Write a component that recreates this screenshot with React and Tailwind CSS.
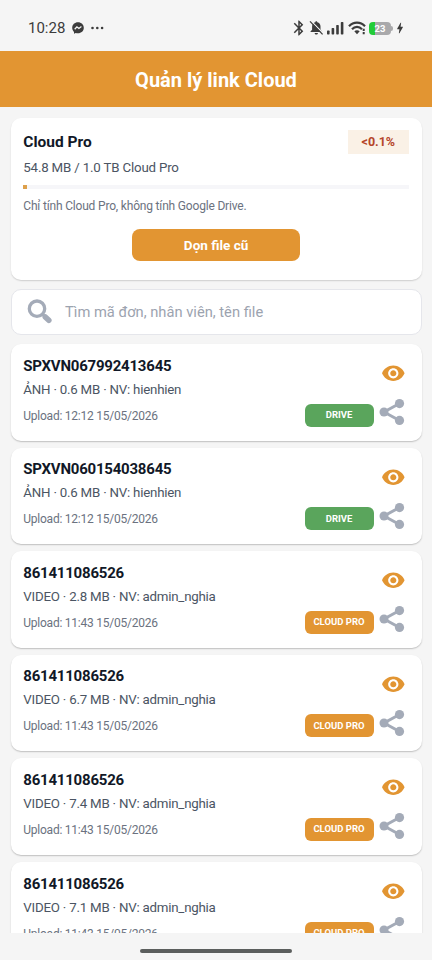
import React from "react";
import { MdBluetooth, MdBolt, MdVisibility } from "react-icons/md";

const files = [
  { code: "SPXVN067992413645", type: "ẢNH", size: "0.6 MB", staff: "hienhien", time: "12:12 15/05/2026", source: "DRIVE" },
  { code: "SPXVN060154038645", type: "ẢNH", size: "0.6 MB", staff: "hienhien", time: "12:12 15/05/2026", source: "DRIVE" },
  { code: "861411086526", type: "VIDEO", size: "2.8 MB", staff: "admin_nghia", time: "11:43 15/05/2026", source: "CLOUD PRO" },
  { code: "861411086526", type: "VIDEO", size: "6.7 MB", staff: "admin_nghia", time: "11:43 15/05/2026", source: "CLOUD PRO" },
  { code: "861411086526", type: "VIDEO", size: "7.4 MB", staff: "admin_nghia", time: "11:43 15/05/2026", source: "CLOUD PRO" },
  { code: "861411086526", type: "VIDEO", size: "7.1 MB", staff: "admin_nghia", time: "11:43 15/05/2026", source: "CLOUD PRO" },
];

const ShareIcon = () => (
  <svg width="26" height="28" viewBox="0 0 26 28" fill="#a4abb8">
    <path d="M20.500 5.500L5 14l15.500 8.500" fill="none" stroke="#a4abb8" strokeWidth="3" />
    <circle cx="20.500" cy="5.600" r="4.600" />
    <circle cx="5" cy="14" r="4.500" />
    <circle cx="20.500" cy="22.400" r="4.600" />
  </svg>
);

const SearchIcon = () => (
  <svg width="26" height="26" viewBox="0 0 26 26" fill="none" stroke="#a4abb8">
    <circle cx="10" cy="9.700" r="7.700" strokeWidth="3.300" />
    <path d="M15.300 15l3 3" strokeWidth="3" />
    <path d="M18.300 18l3.500 3.300" strokeWidth="5.600" strokeLinecap="round" />
  </svg>
);

const StatusBar = () => (
  <div className="flex h-[50.5px] shrink-0 items-center justify-between pt-[6px] pr-[29px] pl-7 text-[#3c3c3c]">
    <div className="flex items-center">
      <span className="text-[15px] leading-5">10:28</span>
      <svg className="ml-[7px]" width="12" height="12" viewBox="0 0 12 12">
        <path
          d="M6 .2C2.700.2.200 2.600.200 5.800c0 1.700.7 3.100 1.800 4.100v1.900l1.700-.9c.7.300 1.500.4 2.300.4 3.300 0 5.800-2.300 5.800-5.500S9.300.2 6 .2z"
          fill="#3c3c3c"
        />
        <path d="M2.700 7.200l2.200-2.400 2 1.700 2.500-1.900" fill="none" stroke="#f5f5f5" strokeWidth="1.300" />
      </svg>
      <svg className="ml-[7px]" width="13" height="4" viewBox="0 0 13 4" fill="#3c3c3c">
        <circle cx="1.500" cy="2" r="1.300" />
        <circle cx="6.300" cy="2" r="1.300" />
        <circle cx="11.100" cy="2" r="1.300" />
      </svg>
    </div>

    <div className="flex items-center">
      <MdBluetooth size={18} />
      {/* Muted bell */}
      <svg className="ml-[1px]" width="15" height="16" viewBox="0 0 15 16">
        <path
          d="M7.300 1.200c.7 0 1 .5 1 1.100 2 .5 3.200 2 3.200 4.100v3.300l1.600 1.800v.6H1.500v-.6l1.600-1.800V6.400c0-2.100 1.200-3.600 3.200-4.100 0-.6.300-1.100 1-1.100zM5.700 13h3.200c0 1-.7 1.600-1.600 1.600S5.700 14 5.700 13z"
          fill="#3c3c3c"
        />
        <path d="M2 .9l12.500 12.800" stroke="#f5f5f5" strokeWidth="1.300" />
        <path d="M1 1.400l12.600 13" stroke="#3c3c3c" strokeWidth="1.300" />
      </svg>
      <svg className="ml-[3px]" width="17" height="14" viewBox="0 0 17 14" fill="#3c3c3c">
        <rect x="0" y="9.500" width="2.600" height="4" rx=".7" />
        <rect x="4.600" y="7" width="2.600" height="6.500" rx=".7" />
        <rect x="9.200" y="4" width="2.600" height="9.500" rx=".7" />
        <rect x="13.800" y="1" width="2.600" height="12.500" rx=".7" />
      </svg>
      <svg className="ml-1" width="19" height="14" viewBox="0 0 19 14" fill="none" stroke="#3c3c3c">
        <path d="M1 5.200C5.500.4 12.500.4 17 5.200" strokeWidth="2.200" />
        <path d="M4 8.200c2.900-3 7.100-3 10 0" strokeWidth="2.200" />
        <path d="M6.300 10.300c1.600-1.500 3.800-1.500 5.400 0L9 13.200z" fill="#3c3c3c" stroke="none" />
        <path d="M15.700 7.800v2.200M15.700 11v2.200" strokeWidth="2" />
      </svg>
      <div className="ml-[2.500px] flex h-[13px] w-[22px] items-center justify-center rounded-[4px] bg-[linear-gradient(90deg,#22cc38_0_27%,#a9a9ab_27%)] pt-[1px] text-[9.5px] leading-none font-bold text-white">
        23
      </div>
      <div className="h-[5px] w-[2px] rounded-r-sm bg-[#a9a9ab]" />
      <MdBolt size={14} className="-mr-[4px]" />
    </div>
  </div>
);

const FileCard = ({ file }) => (
  <div className="flex h-[96.5px] shrink-0 justify-between rounded-[10px] bg-white pt-3 pr-4 pl-[12.3px] shadow-[0_1px_1.5px_rgba(0,0,0,0.22)]">
    <div className="pt-[0.6px]">
      <p className="text-[15px] leading-[19px] font-bold tracking-[-0.22px] text-[#111827]">{file.code}</p>
      <p className="mt-[5px] text-[13.3px] leading-[18px] tracking-[-0.22px] text-[#4b5563]">
        {file.type} · {file.size} · NV: {file.staff}
      </p>
      <p className="mt-[9px] text-[12px] leading-4 tracking-[-0.24px] text-[#6b7280]">Upload: {file.time}</p>
    </div>
    <div className="flex flex-col items-end pt-[5px]">
      <MdVisibility size={24.600} className="text-[#e29532]" />
      <div className="mt-[12px] mr-[1px] flex items-center gap-[5px]">
        <span
          className={`mt-[6px] flex h-[23px] w-[69px] items-center justify-center rounded-[6px] text-[9.5px] font-bold text-white ${
            file.source === "DRIVE" ? "bg-[#5aa55c]" : "bg-[#e29532]"
          }`}
        >
          {file.source}
        </span>
        <ShareIcon />
      </div>
    </div>
  </div>
);

export default function App() {
  return (
    <div className="flex h-[960px] w-[432px] flex-col overflow-hidden bg-[#f5f5f5] font-['Roboto',sans-serif]">
      <StatusBar />

      {/* Header */}
      <header className="flex h-[56.5px] shrink-0 items-center justify-center bg-[#e29532] pt-[2px] text-[20px] font-bold text-white">
        Quản lý link Cloud
      </header>

      <main className="flex min-h-0 flex-1 flex-col overflow-hidden pt-[11px] pr-[10.5px] pl-[11px]">
        {/* Storage usage */}
        <section className="h-[162px] shrink-0 rounded-[10px] bg-white pt-3 pr-[12.7px] pl-[12.3px] shadow-[0_1px_1.5px_rgba(0,0,0,0.16)]">
          <div className="flex h-6 items-center justify-between">
            <h2 className="pt-[2px] text-[15.5px] font-bold text-[#111827]">Cloud Pro</h2>
            <span className="flex h-6 w-[61px] items-center justify-center bg-[#faf1e6] pt-[1px] text-[12.5px] font-bold text-[#b5452a]">
              &lt;0.1%
            </span>
          </div>
          <p className="mt-[5px] text-[13.3px] leading-[18px] tracking-[-0.18px] text-[#4b5563]">
            54.8 MB / 1.0 TB Cloud Pro
          </p>
          <div className="mt-[8px] h-1 bg-[#f6f6f9]">
            <div className="h-full w-1 bg-[#dda04b]" />
          </div>
          <p className="mt-[9px] text-[12px] leading-4 tracking-[-0.18px] text-[#6b7280]">
            Chỉ tính Cloud Pro, không tính Google Drive.
          </p>
          <button className="mx-auto mt-[15px] flex h-8 w-[168px] items-center justify-center rounded-lg bg-[#e29532] text-[13.5px] font-bold text-white">
            Dọn file cũ
          </button>
        </section>

        {/* Search */}
        <div className="mt-[9px] flex h-[46px] shrink-0 items-center rounded-[10px] border border-[#e5e6eb] bg-white pl-[15px]">
          <SearchIcon />
          <span className="ml-[12px] text-[14.7px]/5 text-[#9ca3af]">Tìm mã đơn, nhân viên, tên file</span>
        </div>

        {/* File list */}
        <div className="mt-[9px] flex flex-col gap-[7.1px]">
          {files.map((file, idx) => (
            <FileCard key={idx} file={file} />
          ))}
        </div>
      </main>

      <div className="flex h-[27px] shrink-0 justify-center bg-[#f5f5f5] pt-4">
        <div className="h-1 w-[152px] rounded-full bg-[#5b5e5d]" />
      </div>
    </div>
  );
}
